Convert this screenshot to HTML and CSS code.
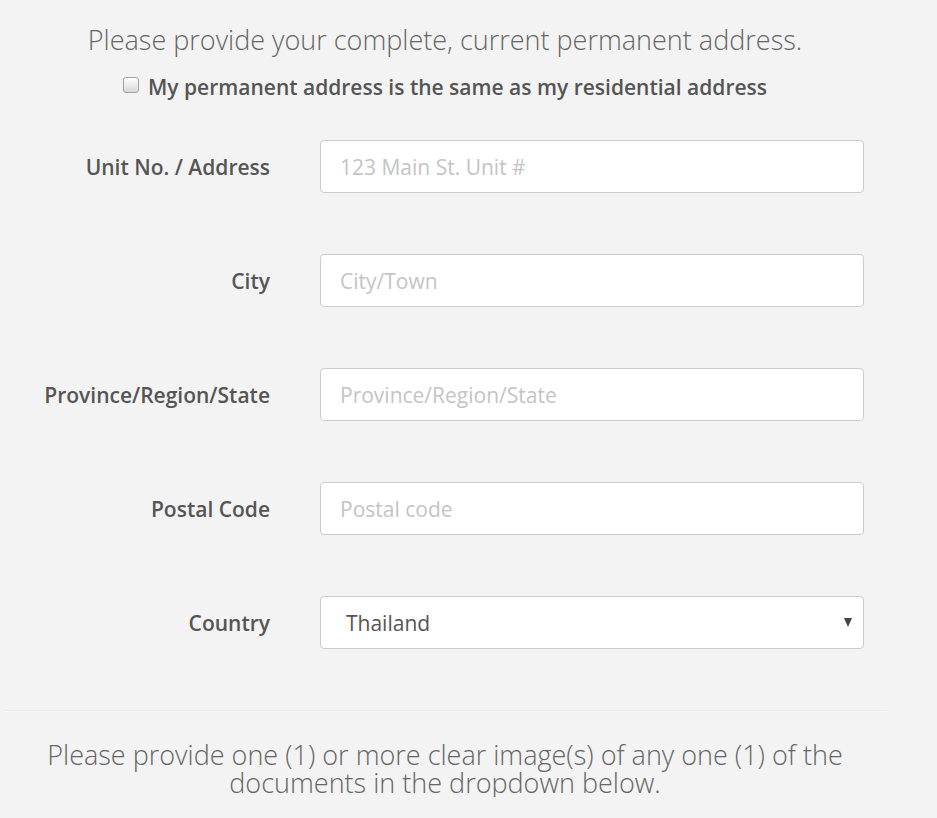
FILE: index.html
```html
<!DOCTYPE html>
<html lang="en">
<head>
  <meta charset="UTF-8" />
  <meta name="viewport" content="width=device-width, initial-scale=1.0"/>
  <title>Permanent Address</title>
  <link rel="stylesheet" href="styles.css">
</head>
<body>
  <div class="panel">
    <p class="lead">Please provide your complete, current permanent address.</p>

    <label class="same-check">
      <input type="checkbox" id="same-address" />
      My permanent address is the same as my residential address
    </label>

    <form class="address-form">
      <div class="form-row">
        <label for="address">Unit No. / Address</label>
        <input id="address" type="text" placeholder="123 Main St. Unit #" />
      </div>
      <div class="form-row">
        <label for="city">City</label>
        <input id="city" type="text" placeholder="City/Town" />
      </div>
      <div class="form-row">
        <label for="province">Province/Region/State</label>
        <input id="province" type="text" placeholder="Province/Region/State" />
      </div>
      <div class="form-row">
        <label for="postal">Postal Code</label>
        <input id="postal" type="text" placeholder="Postal code" />
      </div>
      <div class="form-row">
        <label for="country">Country</label>
        <div class="select-wrap">
          <select id="country">
            <option value="TH">Thailand</option>
            <option value="PH">Philippines</option>
            <option value="SG">Singapore</option>
          </select>
        </div>
      </div>
    </form>

    <hr class="divider" />

    <p class="lead lead-docs">Please provide one (1) or more clear image(s) of any one (1) of the documents in the dropdown below.</p>
  </div>
</body>
</html>
```

FILE: styles.css
```css
* {
  box-sizing: border-box;
}

body {
  margin: 0;
  padding: 0;
  background: #f3f3f3;
  font-family: "Open Sans", sans-serif;
  color: #555;
}

.panel {
  width: 890px;
  padding-top: 25px;
}

.lead {
  margin: 0;
  font-size: 27px;
  font-weight: 300;
  line-height: 30px;
  color: #666;
  text-align: center;
}

.same-check {
  display: flex;
  justify-content: center;
  align-items: center;
  gap: 9px;
  margin-top: 18px;
  font-size: 21px;
  font-weight: 600;
  color: #555;
  line-height: 28px;
}

.same-check input {
  appearance: none;
  width: 16px;
  height: 16px;
  margin: 0 0 4px 0;
  border: 1px solid #a0a0a0;
  border-radius: 3px;
  background: linear-gradient(#fdfdfd, #d8d8d8);
  box-shadow: inset 0 1px 1px #fff;
}

.address-form {
  margin-top: 39px;
}

.form-row {
  display: grid;
  grid-template-columns: 270px 544px;
  column-gap: 50px;
  align-items: center;
  margin-bottom: 61px;
}

.form-row label {
  text-align: right;
  font-size: 21px;
  font-weight: 600;
  color: #555;
}

.form-row input,
.form-row select {
  width: 544px;
  height: 53px;
  padding: 0 19px;
  border: 1px solid #ccc;
  border-radius: 4px;
  background: #fff;
  font-family: "Open Sans", sans-serif;
  font-size: 21px;
  color: #555;
}

.form-row input::placeholder {
  color: #c4c4c4;
}

.select-wrap {
  position: relative;
}

.form-row select {
  appearance: none;
  padding-left: 25px;
}

.select-wrap::after {
  content: "";
  position: absolute;
  right: 12px;
  top: 22px;
  border-left: 4px solid transparent;
  border-right: 4px solid transparent;
  border-top: 9px solid #444;
  pointer-events: none;
}

.divider {
  margin: 0 3px 0 3px;
  border: 0;
  border-top: 1px solid #ebebeb;
  border-bottom: 1px solid #f8f8f8;
}

.lead-docs {
  margin-top: 29px;
  padding: 0 40px;
  line-height: 28px;
}
```
